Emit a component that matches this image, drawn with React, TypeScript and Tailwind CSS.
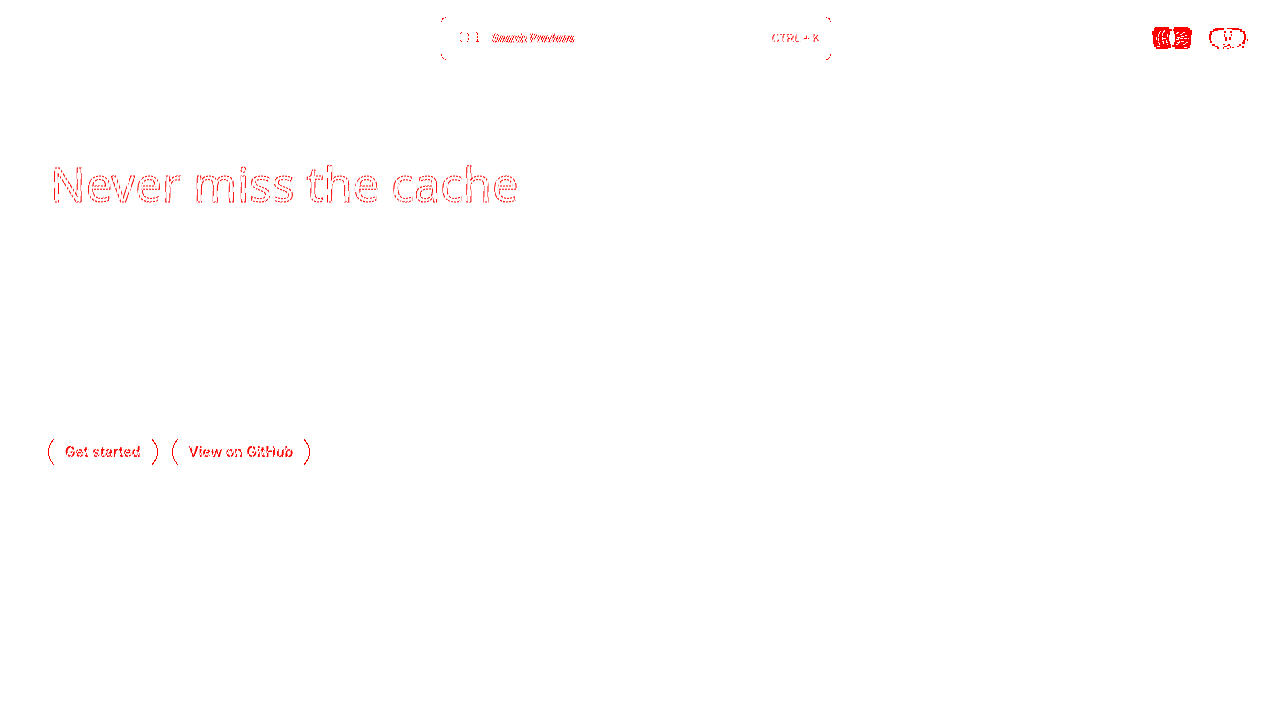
export default function App() {
  return (
    <div className="min-h-screen bg-white font-['Inter',sans-serif] text-[#ff0000]">
      <header className="grid grid-cols-[1fr_392px_1fr] items-center pt-4 pr-8 pl-6">
        <span />
        <button className="relative flex h-11 w-full items-center pr-3 pl-5 font-['Liberation_Sans',sans-serif] text-[11px]">
          <Corners />
          <svg width="20" height="12" viewBox="0 0 20 12" fill="#f00" shapeRendering="crispEdges">
            <path d="M1 0h1v1h-1zM0 1h1v1h-1zM0 8h1v1h-1zM1 9h1v1h-1zM7 1h1v1h-1zM8 2h1v2h-1zM8 6h1v2h-1zM7 9h1v1h-1zM16 0h1v1h-1zM17 1h1v2h-1zM17 4h1v2h-1zM17 7h1v2h-1zM16 9h3v1h-3z" />
          </svg>
          <span className="ml-3 [-webkit-text-stroke:1px_#f00] [mask-image:repeating-linear-gradient(115deg,#000_0_1px,transparent_1px_2px)]">Search Previews</span>
          <kbd className="ml-auto font-['Liberation_Sans',sans-serif] [mask-image:repeating-linear-gradient(115deg,#000_0_2px,transparent_2px_3px)]">CTRL + K</kbd>
        </button>
        <nav className="flex justify-end gap-4">
          <a href="#discord" aria-label="Discord">
            <svg width="40" height="24" viewBox="0 0 40 24" fill="#f00" shapeRendering="crispEdges">
              <path d="M3 1H17V3H20V5H18V9H17V15H18V18H19V22H16V23H4V21H2V18H1V9H0V5H2V2H3ZM22 1H36V2H38V4H40V9H39V19H38V22H36V23H23V21H20V19H22V16H23V8H22V5H21V3H22Z" />
              <path d="M9 5L6 9V15L8 19M13 4L10 9V13L12 18M15 8V11M14 14L16 19M4 11V14M24 8L27 6M28 9L33 6M25 11H29L35 9M24 14L29 12L37 12M25 17L30 15H33M24 19L28 17M31 19L36 16M32 21H35M5 20L9 21M11 12H14" stroke="#fff" fill="none" strokeDasharray="3 1" />
            </svg>
          </a>
          <a href="#github" aria-label="GitHub">
            <svg width="40" height="24" viewBox="0 0 40 24" fill="#f00" shapeRendering="crispEdges">
              <path d="M7 2H16V4H10V5H6V6H4V9H3V15H4V17H2V14H1V8H2V5H5V3H7ZM19 2H31V3H34V5H37V8H38V14H37V18H34V16H35V14H36V8H35V6H32V4H24V3H19Z" />
              <path d="M16 5h2v2h-2zM16 8h1v3h-1zM17 11h2v4h-2zM22 5h2v2h-2zM23 8h1v2h-1zM21 11h2v3h-2zM4 18h3v2h-3zM7 20h3v1h-3zM9 21h2v2h-2zM15 18h2v1h-2zM16 20h3v1h-3zM15 21h1v2h-1zM19 19h1v1h-1zM20 18h2v2h-2zM22 20h1v2h-1zM24 21h2v1h-2zM19 22h2v1h-2zM31 18h2v2h-2zM34 20h2v2h-2zM29 20h2v1h-2zM39 13h1v2h-1z" />
            </svg>
          </a>
        </nav>
      </header>
      <main className="px-12 pt-24">
        <h1 className="w-fit px-0.5 font-['Noto_Sans',sans-serif] text-[47px] leading-[56px] text-white [-webkit-text-stroke:1px_#f00] [mask-image:repeating-linear-gradient(100deg,#000_0_2px,transparent_2px_3px)]">
          Never miss the cache
        </h1>
        <div className="mt-56 flex gap-3.5 text-sm font-semibold">
          <PillButton label="Get started" />
          <PillButton label="View on GitHub" />
        </div>
      </main>
    </div>
  );
}

function PillButton({ label }: { label: string }) {
  return (
    <button className="flex h-8 items-center justify-between gap-2.5">
      <svg width="7" height="28" fill="none" stroke="#f00" shapeRendering="crispEdges" aria-hidden="true">
        <path d="M6 1Q-5 14 6 27" />
      </svg>
      <span className="[mask-image:repeating-linear-gradient(115deg,#000_0_3px,transparent_3px_4px)]">{label}</span>
      <svg width="7" height="28" fill="none" stroke="#f00" shapeRendering="crispEdges" aria-hidden="true">
        <path d="M1 1Q12 14 1 27" />
      </svg>
    </button>
  );
}

function Corners() {
  return (
    <span aria-hidden="true" className="absolute inset-0 flex justify-between">
      <svg width="6" height="44" fill="#f00" shapeRendering="crispEdges">
        <path d="M5 1h1v1h-1zM2 2h2v1h-2zM2 3h1v1h-1zM1 5h1v1h-1zM1 38h1v2h-1zM2 41h1v1h-1zM3 42h1v1h-1zM5 43h1v1h-1z" />
      </svg>
      <svg width="6" height="44" fill="#f00" shapeRendering="crispEdges">
        <path d="M0 1h1v1h-1zM2 2h2v1h-2zM3 3h1v1h-1zM4 5h1v1h-1zM4 38h1v2h-1zM3 41h1v1h-1zM2 42h1v1h-1zM0 43h2v1h-2z" />
      </svg>
    </span>
  );
}
